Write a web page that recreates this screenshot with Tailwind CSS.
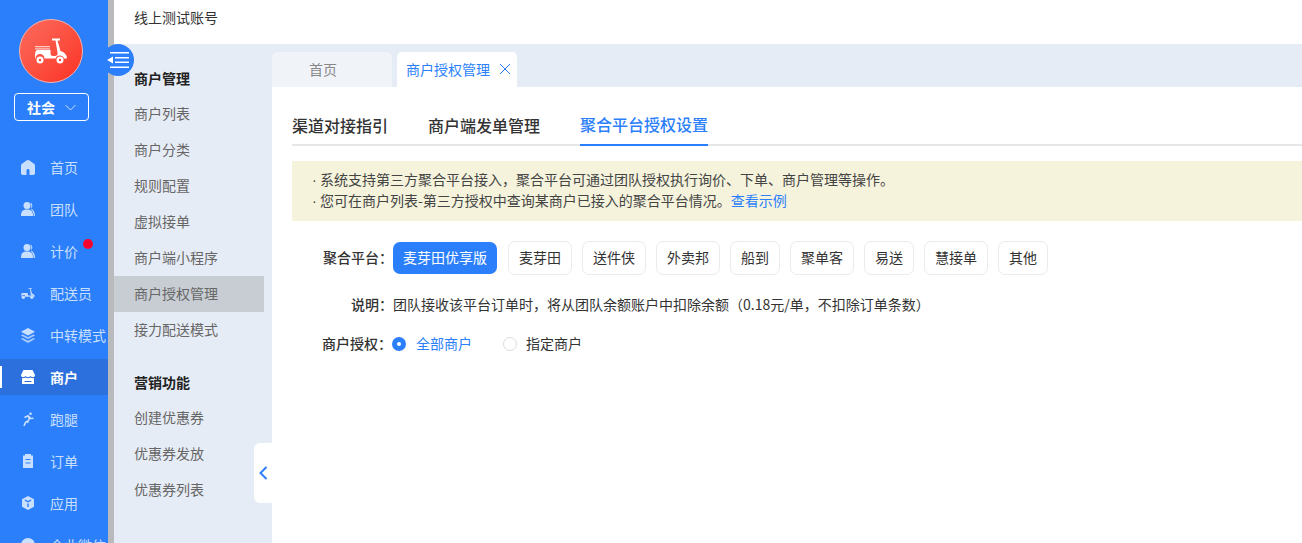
<!DOCTYPE html>
<html lang="zh-CN">
<head>
    <meta charset="UTF-8">
    <meta name="viewport" content="width=device-width, initial-scale=1.0">
    <title>商户授权管理</title>
    <script src="https://cdn.jsdelivr.net/npm/@tailwindcss/browser@4"></script>
</head>
<body class="bg-white h-[543px] w-[1302px] overflow-hidden font-['Noto_Sans_CJK_SC','Noto_Sans',sans-serif] text-[14px] text-[#333]">
<div class="flex h-full relative">
    <!-- main nav -->
    <aside class="w-[108px] h-full shrink-0 bg-[#2b7ffb] flex flex-col overflow-hidden">
        <div class="mt-[19px] ml-[19px] w-[64px] h-[64px] shrink-0 rounded-full border border-[#f9b0a8] bg-gradient-to-br from-[#fb6a5c] to-[#fb2d20] flex items-center justify-center">
            <svg width="32" height="26" viewBox="0 0 32 26" fill="#fff"><path d="M17 .5h8v2h-2.500l3 10.500c3.500 1 6.500 3.500 6.500 7.500H29a4.500 4.500 0 0 0-8.500 0H9.500a4.500 4.500 0 0 0-9 0H0v-3c0-3 .5-4.500 2-5.500h13.500v3.500c0 1.500 1 2.500 2.500 2.500h2c2 0 3-1.500 2.500-3.500L20.500 2.500H17z"/><path d="M0 8h15v1.200H0zM0 10.300h15v1.200H0z" fill-opacity=".7"/><circle cx="5" cy="22" r="3.500"/><circle cx="25" cy="22" r="3.500"/><circle cx="5" cy="22" r="1.200" fill="#fb4a3e"/><circle cx="25" cy="22" r="1.200" fill="#fb4a3e"/></svg>
        </div>
        <div class="mt-[10px] ml-[14px] w-[75px] h-[28px] shrink-0 border border-white rounded-[4px] flex items-center justify-center gap-[10px] text-white font-bold text-[14px]">
            <span>社会</span>
            <svg width="11" height="7" viewBox="0 0 11 7" fill="none" stroke="#cfe1fe" stroke-width="1"><path d="M.5 1l5 5 5-5"/></svg>
        </div>
        <nav class="mt-[25px] w-full flex flex-col text-[#c9dffe]">
            <a class="h-[42px] shrink-0 flex items-center pl-[21px] gap-[15px]"><svg class="w-[14px] h-[15px] shrink-0" viewBox="0 0 14 15" fill="#c9dffe"><path fill-rule="evenodd" d="M7 0c.5 0 1 .2 1.500.6L13 3.800c.7.5 1 1 1 1.800V13c0 1-.8 2-2 2H2c-1.200 0-2-1-2-2V5.600c0-.8.3-1.300 1-1.800L5.500.6C6 .2 6.500 0 7 0zM5.500 10.500V15h3v-4.500c0-.8-.7-1.500-1.500-1.500s-1.500.7-1.500 1.500z"/></svg><span>首页</span></a>
            <a class="h-[42px] shrink-0 flex items-center pl-[21px] gap-[15px]"><svg class="w-[14px] h-[14px] shrink-0" viewBox="0 0 14 14" fill="#c9dffe"><circle cx="6" cy="3.500" r="3.500"/><path d="M0 14c0-4 1-6.500 6-6.500s6 2.500 6 6.500z"/><path d="M9 .3a3.500 3.500 0 0 1 .8 6.200c2.700 1 4.200 3.500 4.200 7.500h-1.300c0-3-1-5.500-3-7 1-2.200 .8-4.800-.7-6.700z"/></svg><span>团队</span></a>
            <a class="h-[42px] shrink-0 flex items-center pl-[21px] gap-[15px] relative"><svg class="w-[14px] h-[14px] shrink-0" viewBox="0 0 14 14" fill="#c9dffe"><circle cx="6" cy="3.500" r="3.500"/><path d="M0 14c0-4 1-6.500 6-6.500s6 2.500 6 6.500z"/><path d="M9 .3a3.500 3.500 0 0 1 .8 6.200c2.700 1 4.200 3.500 4.200 7.500h-1.300c0-3-1-5.500-3-7 1-2.200 .8-4.800-.7-6.700z"/></svg><span>计价</span><i class="absolute left-[83px] top-[9px] w-[10px] h-[10px] rounded-full bg-[#f5052d]"></i></a>
            <a class="h-[42px] shrink-0 flex items-center pl-[21px] gap-[15px]"><svg class="w-[14px] h-[11px] shrink-0" viewBox="0 0 32 26" fill="#c9dffe"><path d="M17 .5h8v2h-2.500l3 10.500c3.500 1 6.500 3.500 6.500 7.500H29a4.500 4.500 0 0 0-8.500 0H9.500a4.500 4.500 0 0 0-9 0H0v-3c0-3 .5-4.500 2-5.500h13.500v3.500c0 1.500 1 2.500 2.500 2.500h2c2 0 3-1.500 2.500-3.500L20.500 2.500H17z"/><circle cx="5" cy="22" r="4"/><circle cx="25" cy="22" r="4"/></svg><span>配送员</span></a>
            <a class="h-[42px] shrink-0 flex items-center pl-[21px] gap-[15px]"><svg class="w-[14px] h-[15px] shrink-0" viewBox="0 0 14 15" fill="#c9dffe"><path d="M7 0l7 3.800L7 7.600 0 3.800z"/><path d="M1.500 6.300L7 9.200l5.500-2.900L14 7.400l-7 3.700-7-3.700z" fill-opacity=".8"/><path d="M1.500 9.900L7 12.800l5.500-2.900L14 11l-7 4-7-4z" fill-opacity=".8"/></svg><span class="whitespace-nowrap">中转模式</span></a>
            <a class="h-[36px] my-[3px] shrink-0 flex items-center pl-[21px] gap-[15px] bg-[#2b70dc] text-white font-bold relative"><i class="absolute left-0 top-[7px] w-[2px] h-[22px] bg-white"></i><svg class="w-[14px] h-[14px] shrink-0" viewBox="0 0 14 14" fill="#fff"><path d="M2.500 0h9L14 5c0 1.500-1 2.200-2.300 2.200-1 0-1.800-.5-2.300-1.200-.5.700-1.400 1.200-2.400 1.200S5.100 6.700 4.600 6c-.5.700-1.300 1.200-2.300 1.200C1 7.200 0 6.500 0 5z"/><path d="M1 8.200c1.300.3 2.500 0 3.500-.6 1.500.9 3.500.9 5 0 1 .6 2.200.9 3.500.6V14H1zm2.500 2.800v1h7v-1z" fill-rule="evenodd"/></svg><span>商户</span></a>
            <a class="h-[42px] shrink-0 flex items-center pl-[21px] gap-[15px]"><svg class="w-[14px] h-[14px] shrink-0" viewBox="0 0 14 14" fill="none" stroke="#c9dffe" stroke-width="1.600"><circle cx="9.500" cy="1.700" r="1.300" fill="#c9dffe" stroke="none"/><path d="M3.500 5.500L7 3.800l1.500 3-2 3L7 11M8 4.500l1.500 2 3-.2M6 9L4.500 10.500 3 14"/></svg><span>跑腿</span></a>
            <a class="h-[42px] shrink-0 flex items-center pl-[21px] gap-[15px]"><svg class="w-[14px] h-[14px] shrink-0" viewBox="0 0 14 14" fill="#c9dffe"><path fill-rule="evenodd" d="M4 0h6v1.500h2V14H2V1.500h2zM4.500 5v1h5V5zm0 3.500v1h5v-1z"/></svg><span>订单</span></a>
            <a class="h-[42px] shrink-0 flex items-center pl-[21px] gap-[15px]"><svg class="w-[14px] h-[14px] shrink-0" viewBox="0 0 14 14" fill="#c9dffe"><path fill-rule="evenodd" d="M7 0l6 3.200v7.600L7 14l-6-3.200V3.200zM3.500 4.500L7 6.500l3.500-2-.8-1L7 5 4.300 3.500zM6.300 7.500v3.500h1.400V7.500z"/></svg><span>应用</span></a>
            <a class="h-[42px] shrink-0 flex items-center pl-[21px] gap-[15px]"><svg class="w-[14px] h-[14px] shrink-0" viewBox="0 0 14 14" fill="#c9dffe"><circle cx="7" cy="7" r="7"/></svg><span>企业微信</span></a>
        </nav>
    </aside>
    <div class="w-[6px] h-full shrink-0 bg-[#b9babb]"></div>

    <div class="flex-1 min-w-0 flex flex-col">
        <header class="h-[44px] shrink-0 flex items-center pl-[20px] pb-[10px] bg-white text-[#333]">线上测试账号</header>
        <div class="flex-1 min-h-0 flex">
            <!-- sub nav -->
            <div class="w-[158px] shrink-0 bg-[#e6ecf5] pt-[16px] relative">
                <h3 class="h-[36px] pl-[20px] flex items-center font-bold text-[#222]">商户管理</h3>
                <ul class="text-[#666] w-[150px]">
                    <li class="h-[36px] pl-[20px] pb-[2px] flex items-center">商户列表</li>
                    <li class="h-[36px] pl-[20px] pb-[2px] flex items-center">商户分类</li>
                    <li class="h-[36px] pl-[20px] pb-[2px] flex items-center">规则配置</li>
                    <li class="h-[36px] pl-[20px] pb-[2px] flex items-center">虚拟接单</li>
                    <li class="h-[36px] pl-[20px] pb-[2px] flex items-center">商户端小程序</li>
                    <li class="h-[36px] pl-[20px] pb-[2px] flex items-center bg-[#c8cdd3]">商户授权管理</li>
                    <li class="h-[36px] pl-[20px] pb-[2px] flex items-center">接力配送模式</li>
                </ul>
                <h3 class="mt-[16px] h-[36px] pl-[20px] flex items-center font-bold text-[#222]">营销功能</h3>
                <ul class="text-[#666] w-[150px]">
                    <li class="h-[36px] pl-[20px] pb-[2px] flex items-center">创建优惠券</li>
                    <li class="h-[36px] pl-[20px] pb-[2px] flex items-center">优惠券发放</li>
                    <li class="h-[36px] pl-[20px] pb-[2px] flex items-center">优惠券列表</li>
                </ul>
                <button class="absolute right-0 top-[399px] w-[18px] h-[60px] bg-white rounded-l-[6px] flex items-center justify-center">
                    <svg width="9" height="14" viewBox="0 0 9 14" fill="none" stroke="#2b7ffb" stroke-width="2"><path d="M7.500 1l-6 6 6 6"/></svg>
                </button>
            </div>

            <main class="flex-1 min-w-0 flex flex-col">
                <div class="h-[43px] shrink-0 bg-[#e6ecf5] flex items-end gap-[5px]">
                    <div class="w-[120px] h-[35px] bg-[#f0f3f8] rounded-t-[5px] flex items-center pl-[37px] pb-[1px] text-[#888]">首页</div>
                    <div class="w-[120px] h-[35px] bg-white rounded-t-[5px] flex items-center pl-[9px] pb-[1px] gap-[9px] text-[#2b7ffb]">
                        <span class="whitespace-nowrap">商户授权管理</span>
                        <svg width="12" height="12" viewBox="0 0 12 12" fill="none" stroke="#2b7ffb" stroke-width="1"><path d="M1 1l10 10M11 1L1 11"/></svg>
                    </div>
                </div>
                <div class="flex-1 bg-white pl-[20px]">
                    <div class="mt-[18px] h-[41px] flex gap-[40px] border-b-2 border-[#e4e6e8] font-medium text-[16px] text-[#333]">
                        <span class="h-[41px] pb-[2px] flex items-center">渠道对接指引</span>
                        <span class="h-[41px] pb-[2px] flex items-center">商户端发单管理</span>
                        <span class="h-[41px] pb-[2px] flex items-center text-[#2b7ffb] border-b-2 border-[#2b7ffb]">聚合平台授权设置</span>
                    </div>
                    <div class="mt-[15px] h-[60px] bg-[#f5f3dc] flex flex-col justify-center pl-[20px] pb-[2px] leading-[20px] text-[#444]">
                        <p><span class="inline-block w-[8px] font-['Liberation_Sans']">·</span>系统支持第三方聚合平台接入，聚合平台可通过团队授权执行询价、下单、商户管理等操作。</p>
                        <p><span class="inline-block w-[8px] font-['Liberation_Sans']">·</span>您可在商户列表-第三方授权中查询某商户已接入的聚合平台情况。<span class="text-[#2b7ffb]">查看示例</span></p>
                    </div>
                    <div class="mt-[20px] flex items-center h-[34px]">
                        <span class="w-[101px] pb-[2px] text-right font-medium text-[#333]">聚合平台：</span>
                        <div class="flex items-center gap-[10px]">
                            <span class="h-[32px] w-[104px] mr-[1px] pb-[2px] rounded-[7px] bg-[#2b7ffb] text-white flex items-center justify-center">麦芽田优享版</span>
                            <span class="h-[34px] w-[64px] pb-[2px] rounded-[7px] border border-[#ebebeb] flex items-center justify-center">麦芽田</span>
                            <span class="h-[34px] w-[64px] pb-[2px] rounded-[7px] border border-[#ebebeb] flex items-center justify-center">送件侠</span>
                            <span class="h-[34px] w-[64px] pb-[2px] rounded-[7px] border border-[#ebebeb] flex items-center justify-center">外卖邦</span>
                            <span class="h-[34px] w-[50px] pb-[2px] rounded-[7px] border border-[#ebebeb] flex items-center justify-center">船到</span>
                            <span class="h-[34px] w-[64px] pb-[2px] rounded-[7px] border border-[#ebebeb] flex items-center justify-center">聚单客</span>
                            <span class="h-[34px] w-[50px] pb-[2px] rounded-[7px] border border-[#ebebeb] flex items-center justify-center">易送</span>
                            <span class="h-[34px] w-[64px] pb-[2px] rounded-[7px] border border-[#ebebeb] flex items-center justify-center">慧接单</span>
                            <span class="h-[34px] w-[50px] pb-[2px] rounded-[7px] border border-[#ebebeb] flex items-center justify-center">其他</span>
                        </div>
                    </div>
                    <div class="mt-[20px] flex items-center h-[20px]">
                        <span class="w-[101px] pb-[2px] text-right font-medium">说明：</span>
                        <span class="pb-[2px]">团队接收该平台订单时，将从团队余额账户中扣除余额（0.18元/单，不扣除订单条数）</span>
                    </div>
                    <div class="mt-[19px] flex items-center h-[20px]">
                        <span class="w-[100px] pb-[2px] shrink-0 text-right font-medium">商户授权：</span>
                        <span class="w-[14px] h-[14px] rounded-full bg-[#2b7ffb] flex items-center justify-center"><i class="block w-[4px] h-[4px] rounded-full bg-white"></i></span>
                        <span class="ml-[10px] pb-[2px] text-[#2b7ffb]">全部商户</span>
                        <span class="ml-[31px] w-[14px] h-[14px] rounded-full border border-[#dcdcdc]"></span>
                        <span class="ml-[9px] pb-[2px]">指定商户</span>
                    </div>
                </div>
            </main>
        </div>
    </div>

    <!-- collapse toggle straddles the nav edge -->
    <button class="absolute left-[102px] top-[44px] w-[32px] h-[32px] rounded-full bg-[#2b7ffb] flex items-center justify-center">
        <svg width="22" height="16" viewBox="0 0 22 16" fill="#fff"><path d="M0 8l6-3.500v7zM3 0h19v1.500H3zM8 5h14v1.500H8zM8 9.500h14V11H8zM3 14.500h19V16H3z"/></svg>
    </button>
</div>
</body>
</html>
